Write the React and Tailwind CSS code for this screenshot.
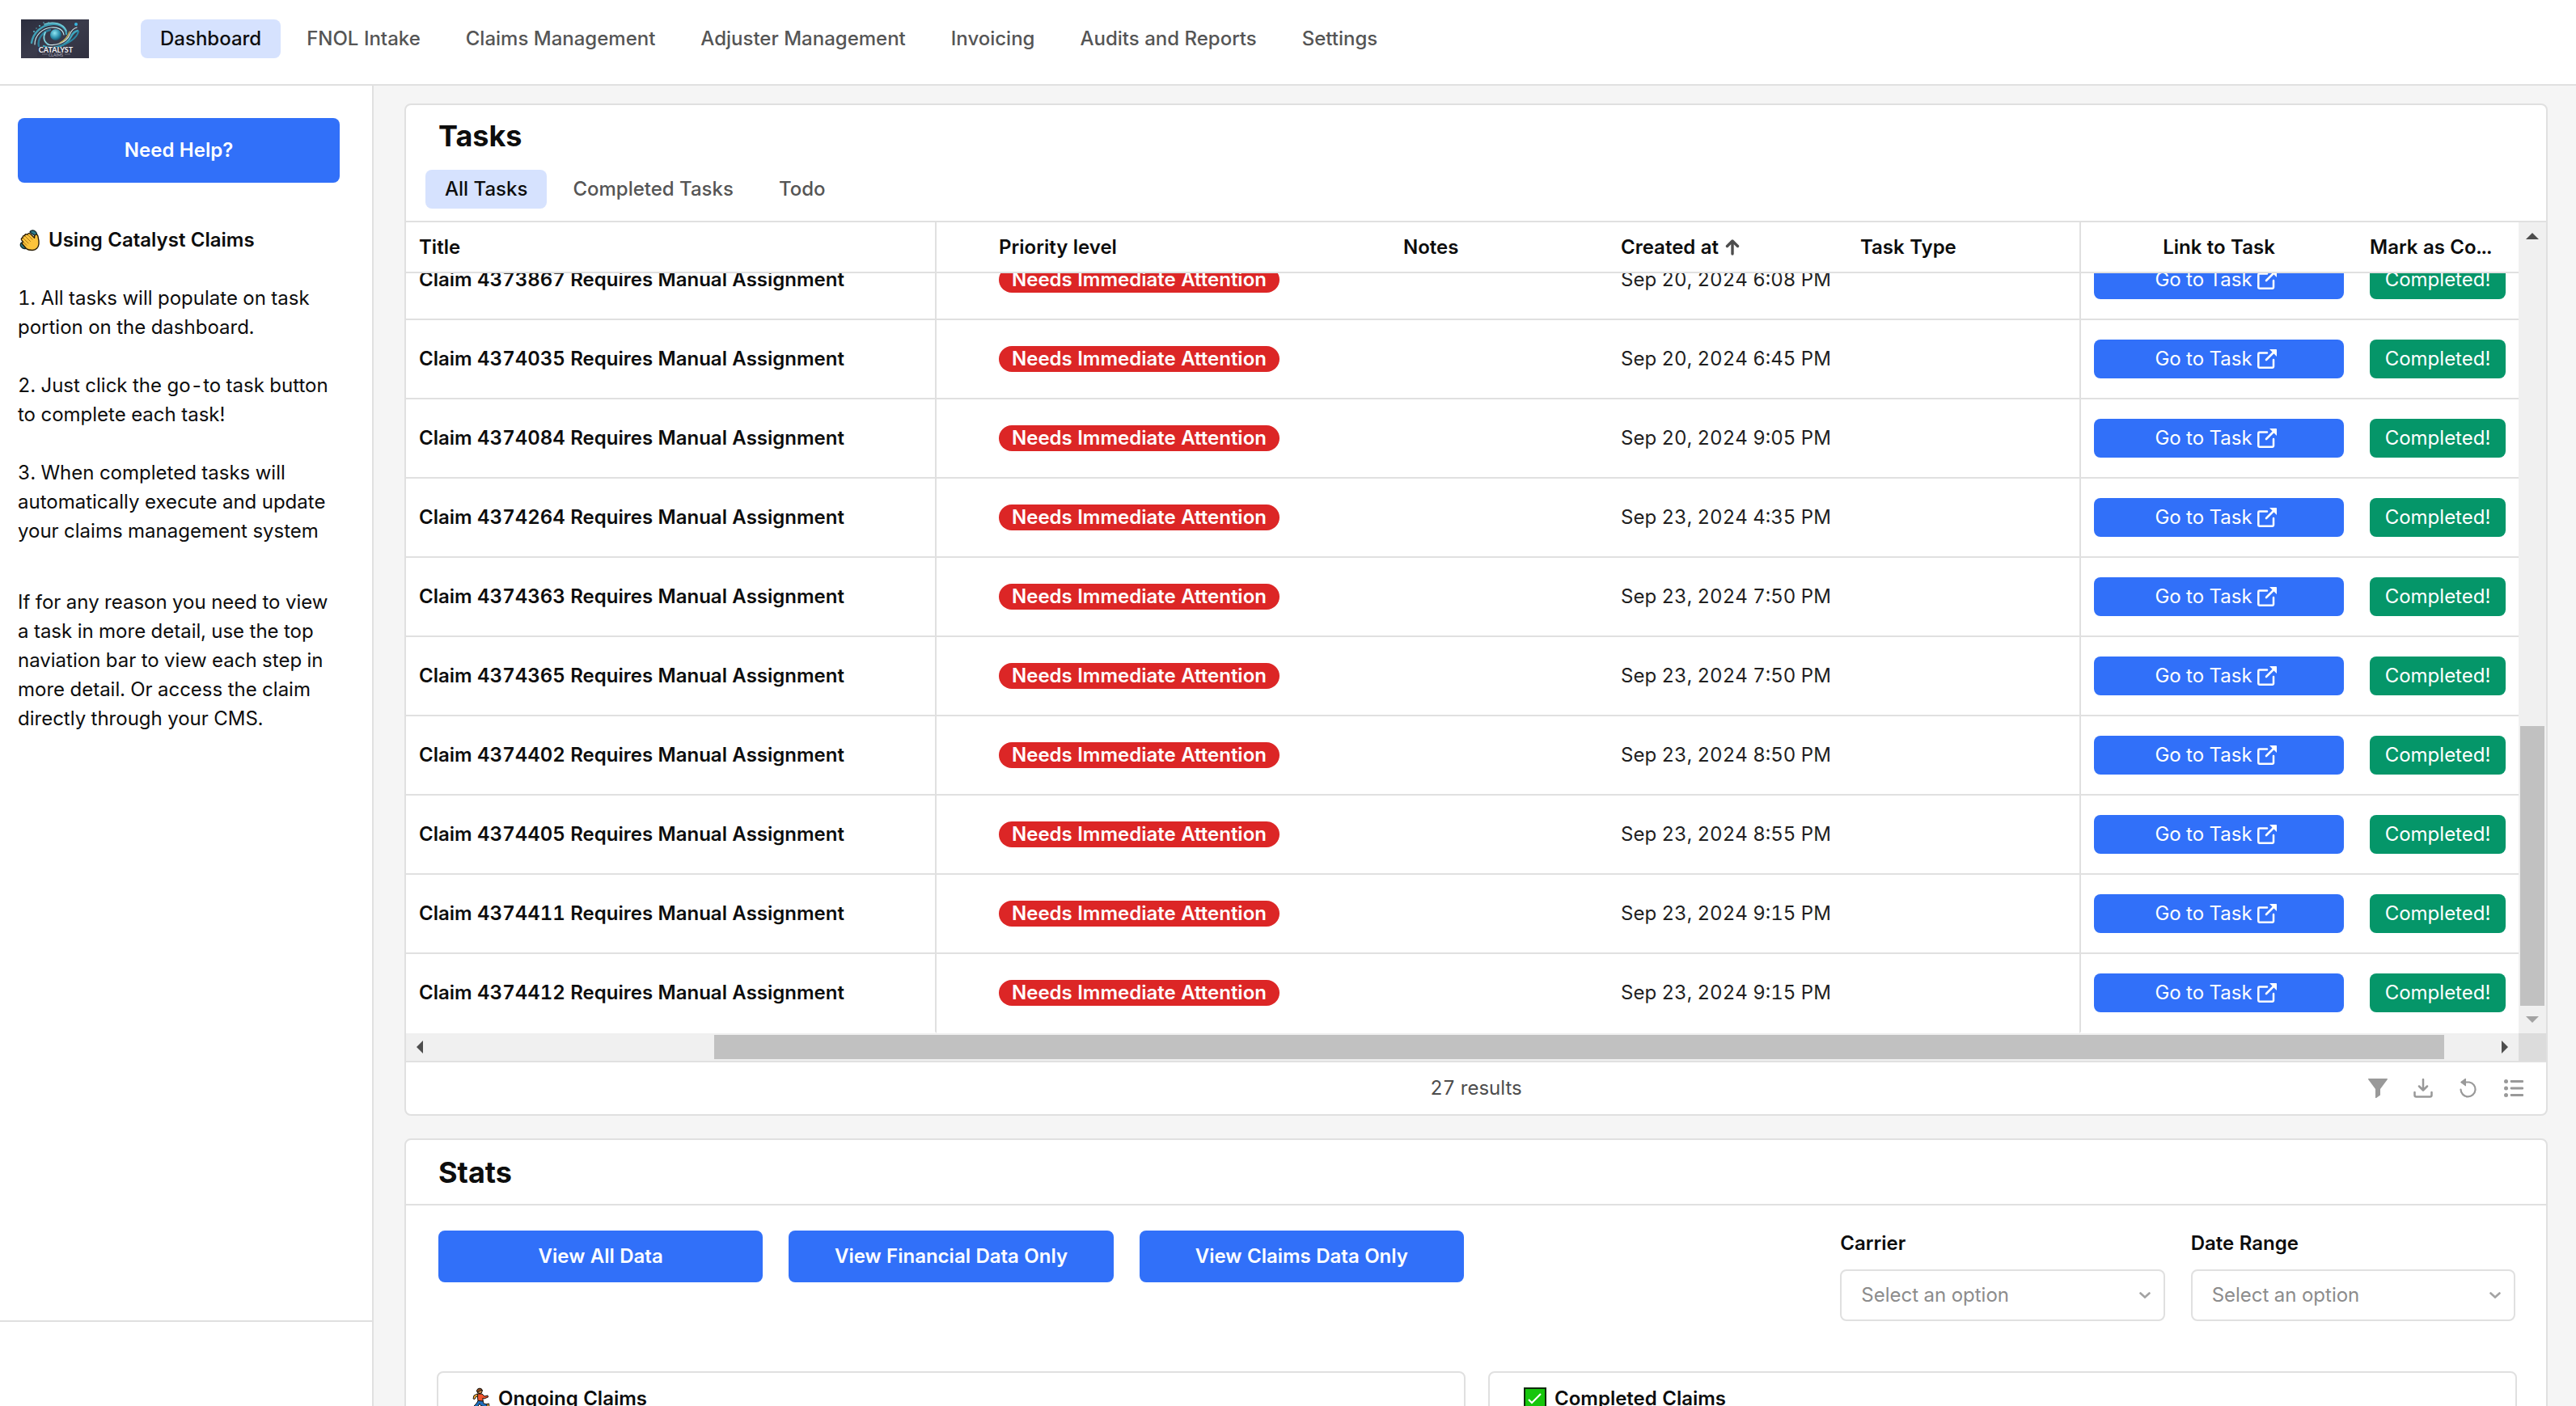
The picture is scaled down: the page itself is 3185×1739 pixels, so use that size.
import React, { useLayoutEffect, useRef } from 'react';

const navItems = [
  'Dashboard',
  'FNOL Intake',
  'Claims Management',
  'Adjuster Management',
  'Invoicing',
  'Audits and Reports',
  'Settings',
];

const tabs = ['All Tasks', 'Completed Tasks', 'Todo'];

const tasks = [
  { claim: 4373867, created: 'Sep 20, 2024 6:08 PM' },
  { claim: 4374035, created: 'Sep 20, 2024 6:45 PM' },
  { claim: 4374084, created: 'Sep 20, 2024 9:05 PM' },
  { claim: 4374264, created: 'Sep 23, 2024 4:35 PM' },
  { claim: 4374363, created: 'Sep 23, 2024 7:50 PM' },
  { claim: 4374365, created: 'Sep 23, 2024 7:50 PM' },
  { claim: 4374402, created: 'Sep 23, 2024 8:50 PM' },
  { claim: 4374405, created: 'Sep 23, 2024 8:55 PM' },
  { claim: 4374411, created: 'Sep 23, 2024 9:15 PM' },
  { claim: 4374412, created: 'Sep 23, 2024 9:15 PM' },
];

const Logo = () => (
  <svg viewBox="0 0 84 48" className="w-[84px] h-12 shrink-0" role="img" aria-label="Catalyst Claims">
    <defs>
      <linearGradient id="logoBg" x1="0" y1="0" x2="1" y2="1">
        <stop offset="0" stopColor="#2b2d3d" />
        <stop offset="0.5" stopColor="#3a3b4b" />
        <stop offset="1" stopColor="#30303f" />
      </linearGradient>
      <radialGradient id="logoOrb" cx="0.4" cy="0.35" r="0.7">
        <stop offset="0" stopColor="#8fe6f2" />
        <stop offset="0.6" stopColor="#2f93b0" />
        <stop offset="1" stopColor="#174a63" />
      </radialGradient>
    </defs>
    <rect width="84" height="48" fill="url(#logoBg)" />
    <g fill="none" strokeLinecap="round">
      <path d="M13 29c2-13 13-22 25-23 11-1 18 5 18 12" stroke="#3f9fb5" strokeWidth="2.4" />
      <path d="M17 31c0-12 10-20 20-21 9-1 15 3 16 9" stroke="#bfe9ee" strokeWidth="1.2" />
      <path d="M22 33c-2-9 5-18 14-20" stroke="#2c7f9c" strokeWidth="2.4" />
      <path d="M29 6c11-4 23-1 27 8" stroke="#6fc9d6" strokeWidth="1.6" />
      <path d="M28 33c10 5 28 1 34-12 2-4 4-6 8-7" stroke="#3fa7bf" strokeWidth="2.4" />
      <path d="M33 31c10 2 23-2 27-12 2-5 5-8 9-9" stroke="#d6eef0" strokeWidth="1.2" />
      <path d="M46 33c12-2 23-10 25-18" stroke="#2b86a3" strokeWidth="2" />
      <path d="M48 29c6-3 10-8 12-14" stroke="#c9b458" strokeWidth="1.2" />
      <path d="M30 16c-3 6-2 12 4 15" stroke="#7ed4de" strokeWidth="1.8" />
    </g>
    <circle cx="43" cy="19" r="7" fill="url(#logoOrb)" />
    <circle cx="68" cy="6" r="2" fill="#38b6e0" />
    <g fill="#5cc0d2">
      <circle cx="16" cy="15" r="1" />
      <circle cx="23" cy="8" r="1" />
      <circle cx="28" cy="4" r="0.8" />
      <circle cx="34" cy="4" r="0.8" />
      <circle cx="19" cy="11" r="0.7" />
    </g>
    <path d="M20 34h46v12H20z" fill="#343545" opacity="0.8" />
    <text x="43" y="41" textAnchor="middle" fontFamily="Lato, sans-serif" fontWeight="700" fontSize="9" fill="#f4f4f6">
      CATALYST
    </text>
    <path d="M26 43h7M54 43h7" stroke="#9a9aa8" strokeWidth="0.6" />
    <text x="43" y="46" textAnchor="middle" fontFamily="Lato, sans-serif" fontSize="5" fill="#b9b9c4">
      CLAIMS
    </text>
  </svg>
);

const WaveIcon = () => (
  <svg viewBox="0 0 28 28" className="w-7 h-7 shrink-0" aria-hidden="true">
    <g fill="#2f7d8c" stroke="#10292f" strokeWidth="1.4" strokeLinejoin="round">
      <path d="M15 4c1-2.500 5-2.600 7-.4 1.800 2 2 4.200 1.200 6.400z" />
      <path d="M5 17c-1.800.6-2.300 3.200-.9 5.200 1.500 2 4 2.800 6.400 1.800z" />
    </g>
    <path
      d="M10.500 24.500L5.800 19c-1-1.300-.2-2.500.9-2.600l-2-2.500c-1-1.400.2-2.900 1.600-2.600-1-1.700.6-3.300 2.200-2.600 0-2 2-2.700 3.400-1.500.5-1.800 2.500-2 3.700-.9l5 4.900.2-2.400c.3-2.300 3.400-2.300 4 0 .7 3 1.600 6.200 1.200 10-.4 4.400-3.600 7.700-8 7.700-3 0-5.400-.2-7.500-2z"
      fill="#fcc43c"
      stroke="#2a1d05"
      strokeWidth="1.400"
      strokeLinejoin="round"
    />
    <path d="M6.800 11.600l6.400 6.400M9 9l6.500 6.500M12.500 7.700l5.500 5.500M7 16.500l3.800 3.800" fill="none" stroke="#9a6a12" strokeWidth="0.9" strokeLinecap="round" />
  </svg>
);

const RunnerIcon = () => (
  <svg viewBox="0 0 22 28" className="w-[22px] h-7 shrink-0" aria-hidden="true">
    <g stroke="#16110c" strokeWidth="1" strokeLinejoin="round">
      <path d="M8 15l5 1 1 4 5 1-1 3-7-1-2-3-3 5-4 1-1-2 4-4z" fill="#1f6fbf" />
      <path d="M6 8l6 0 3 3 4-1 .5 2-5 2-1.500-1 0 4-6-.5z" fill="#f0542d" />
      <path d="M6 8l-4 2-1 4 2 .5 1.500-3 2.500-.5z" fill="#fbb13a" />
      <circle cx="9" cy="4.500" r="3.200" fill="#c98a4a" />
      <path d="M5.500 5c-.5-4 6-5.500 7-1-2-1-4 0-5 2z" fill="#8b4a22" />
      <path d="M18 20.500l2.500-.5.5 4-3 .5z" fill="#fbb13a" />
    </g>
  </svg>
);

const CheckIcon = () => (
  <svg viewBox="0 0 28 28" className="w-7 h-7 shrink-0" aria-hidden="true">
    <rect x="1" y="1" width="26" height="26" fill="#16c60c" stroke="#0f2b0d" strokeWidth="2" />
    <path d="M6 15l4 4L21 8" fill="none" stroke="#fff" strokeWidth="2.200" />
  </svg>
);

const ExternalIcon = () => (
  <svg viewBox="0 0 24 24" className="w-6 h-6" aria-hidden="true">
    <path d="M12 4.500H2.500a1.200 1.200 0 0 0-1.200 1.200v15.800a1.200 1.200 0 0 0 1.200 1.200h16.300a1.200 1.200 0 0 0 1.200-1.200V13" fill="none" stroke="currentColor" strokeWidth="2.500" strokeLinecap="round" />
    <path d="M11 13L20 4" stroke="currentColor" strokeWidth="2.600" strokeLinecap="round" />
    <path d="M15 0h8.200a.8.8 0 0 1 .8.8V9z" fill="currentColor" />
  </svg>
);

const toolbar = [
  {
    label: 'Filter',
    icon: <path d="M.6 0h22.800c.5 0 .8.600.5 1L15 13v7.500L10 24h-1V13L.100 1c-.3-.4 0-1 .5-1z" fill="currentColor" />,
  },
  {
    label: 'Download',
    icon: (
      <path d="M12 1v13M7 9.500l5 5 5-5M1.500 17v3.500a2 2 0 0 0 2 2h17a2 2 0 0 0 2-2V17" fill="none" stroke="currentColor" strokeWidth="2.500" strokeLinecap="round" strokeLinejoin="round" />
    ),
  },
  {
    label: 'Refresh',
    icon: (
      <>
        <path d="M4 4.500h9a9 9 0 1 1-10.500 9" fill="none" stroke="currentColor" strokeWidth="2.200" strokeLinecap="round" />
        <path d="M8.500 0v9L2.500 4.500z" fill="currentColor" stroke="currentColor" strokeLinejoin="round" />
      </>
    ),
  },
  {
    label: 'Columns',
    icon: (
      <>
        <path d="M9 3.500h14M9 12h14M9 20.500h14" stroke="currentColor" strokeWidth="2.800" strokeLinecap="round" />
        <circle cx="2.500" cy="3.500" r="2.500" fill="currentColor" />
        <circle cx="2.500" cy="12" r="2.500" fill="currentColor" />
        <circle cx="2.500" cy="20.500" r="2.500" fill="currentColor" />
      </>
    ),
  },
];

const Arrow = ({ d, className }) => (
  <svg viewBox="0 0 16 16" className={className} aria-hidden="true">
    <path d={d} fill="currentColor" />
  </svg>
);

const TaskTable = () => {
  const boxRef = useRef(null);

  // open on the newest tasks
  useLayoutEffect(() => {
    boxRef.current.scrollTop = boxRef.current.scrollHeight;
  }, []);

  const th = 'sticky top-0 z-10 h-[63px] p-0 px-4 bg-white border-b-2 border-[#e0e0e0] font-semibold whitespace-nowrap';

  return (
    <div>
      <div className="flex">
        <div ref={boxRef} className="flex-1 min-w-0 h-[1003px] overflow-y-auto [scrollbar-width:none]">
          <table className="w-full table-fixed border-separate border-spacing-0 text-left">
            <colgroup>
              <col className="w-[656px]" />
              <col className="w-[561px]" />
              <col className="w-[269px]" />
              <col className="w-[296px]" />
              <col />
              <col className="w-[343px]" />
              <col className="w-[200px]" />
            </colgroup>
            <thead>
              <tr>
                <th className={`${th} border-r-2`}>Title</th>
                <th className={`${th} pl-[77px]`}>Priority level</th>
                <th className={th}>Notes</th>
                <th className={th}>
                  <span className="flex items-center gap-2">
                    Created at
                    <svg viewBox="0 0 18 20" className="w-[18px] h-5 text-[#4d4d4d]" aria-hidden="true">
                      <path d="M9 18V3M2.500 8.500L9 2l6.500 6.500" fill="none" stroke="currentColor" strokeWidth="3.400" strokeLinecap="round" strokeLinejoin="round" />
                    </svg>
                  </span>
                </th>
                <th className={th}>Task Type</th>
                <th className={`${th} border-l-2 text-center`}>Link to Task</th>
                <th className={th}>Mark as Co...</th>
              </tr>
            </thead>
            <tbody className="[&_td]:h-[98px] [&_td]:py-0 [&_td]:px-4 [&_td]:border-b-2 [&_td]:border-[#e0e0e0] [&_tr:last-child_td]:border-b-white">
              {tasks.map((task) => (
                <tr key={task.claim}>
                  <td className="border-r-2 font-semibold whitespace-nowrap">
                    Claim {task.claim} Requires Manual Assignment
                  </td>
                  <td className="pl-[77px]!">
                    <span className="block w-fit h-8 px-4 rounded-full bg-[#dc2626] text-white font-semibold leading-8 whitespace-nowrap">
                      Needs Immediate Attention
                    </span>
                  </td>
                  <td />
                  <td className="whitespace-nowrap text-[#1f1f1f]">{task.created}</td>
                  <td />
                  <td className="border-l-2">
                    <button className="w-full h-12 pr-2 flex items-center justify-center gap-1.5 rounded-lg bg-[#3170f9] text-white">
                      Go to Task
                      <ExternalIcon />
                    </button>
                  </td>
                  <td>
                    <button className="w-full h-12 flex items-center justify-center rounded-lg bg-[#059669] text-white">
                      Completed!
                    </button>
                  </td>
                </tr>
              ))}
            </tbody>
          </table>
        </div>
        <div className="w-[34px] flex flex-col items-center bg-[#f0f0f0]">
          <div className="h-[34px] flex items-center text-[#4d4d4d]">
            <Arrow className="w-4 h-4" d="M0 12L8 4l8 8z" />
          </div>
          <div className="w-[30px] flex-1" />
          <div className="w-[30px] h-[346px] bg-[#c1c1c1]" />
          <div className="h-[34px] flex items-center text-[#a3a3a3]">
            <Arrow className="w-4 h-4" d="M0 4l8 8 8-8z" />
          </div>
        </div>
      </div>
      <div className="flex h-[34px]">
        <div className="flex-1 flex items-center bg-[#f0f0f0] text-[#4d4d4d]">
          <div className="w-[34px] flex justify-center">
            <Arrow className="w-4 h-4" d="M12 0L4 8l8 8z" />
          </div>
          <div className="grow-[347] basis-0" />
          <div className="h-[30px] grow-[2139] basis-0 bg-[#c1c1c1]" />
          <div className="grow-[58] basis-0" />
          <div className="w-[34px] flex justify-center">
            <Arrow className="w-4 h-4" d="M4 0l8 8-8 8z" />
          </div>
        </div>
        <div className="w-[34px] bg-[#dcdcdc]" />
      </div>
    </div>
  );
};

const SelectField = ({ id, label, className }) => (
  <div className={className}>
    <label htmlFor={id} className="block leading-8 font-semibold">{label}</label>
    <div className="relative mt-4">
      <select id={id} className="w-full h-16 pl-6 pr-16 appearance-none rounded-lg border-2 border-[#e0e0e0] bg-white text-[#8c8c8c]">
        <option>Select an option</option>
      </select>
      <svg viewBox="0 0 14 8" className="absolute right-[18px] top-7 w-[14px] h-2 text-[#a3a3a3] pointer-events-none" aria-hidden="true">
        <path d="M1.500 1.500L7 6.500l5.500-5" fill="none" stroke="currentColor" strokeWidth="2.600" strokeLinecap="round" />
      </svg>
    </div>
  </div>
);

const Sidebar = () => (
  <aside className="w-[462px] shrink-0 flex flex-col bg-white border-r-2 border-[#e0e0e0]">
    <div className="flex-1 pt-10 pl-[22px] pr-10">
      <button className="w-full h-20 rounded-lg bg-[#3170f9] text-white font-semibold">Need Help?</button>
      <div className="mt-[53px] space-y-9">
        <h2 className="flex items-center gap-2.5 font-semibold">
          <WaveIcon />
          Using Catalyst Claims
        </h2>
        <p>1. All tasks will populate on task portion on the dashboard.</p>
        <p>2. Just click the go-to task button to complete each task!</p>
        <p>3. When completed tasks will automatically execute and update your claims management system</p>
      </div>
      <p className="mt-[52px]">
        If for any reason you need to view a task in more detail, use the top naviation bar to view each step in more detail. Or access the claim directly through your CMS.
      </p>
    </div>
    <div className="h-[106px] border-t-2 border-[#e0e0e0]" />
  </aside>
);

const App = () => {
  return (
    <div className="h-screen flex flex-col overflow-hidden bg-[#f5f5f5] text-[#0d0d0d] text-[24px] leading-9 tabular-nums font-[Inter,sans-serif]">
      <header className="h-[106px] shrink-0 flex items-start pt-6 pl-[26px] bg-white border-b-2 border-[#e0e0e0]">
        <Logo />
        <nav className="ml-16 flex gap-2">
          {navItems.map((item, i) => (
            <a
              key={item}
              href="#"
              className={`h-12 px-6 flex items-center rounded-lg font-medium whitespace-nowrap ${i === 0 ? 'bg-[#d6e2fe]' : 'text-[#555555]'}`}
            >
              {item}
            </a>
          ))}
        </nav>
      </header>

      <div className="flex-1 min-h-0 flex">
        <Sidebar />
        <main className="flex-1 min-w-0 overflow-hidden pt-[22px] pl-[38px] pr-[35px]">
          <section className="bg-white border-2 border-[#e0e0e0] rounded-lg">
            <div className="pt-4 pb-[15px] border-b-2 border-[#e0e0e0]">
              <h1 className="pl-10 text-[36px] leading-11 font-bold">Tasks</h1>
              <div className="mt-5 pl-6 flex gap-2">
                {tabs.map((tab, i) => (
                  <button
                    key={tab}
                    className={`h-12 px-6 rounded-lg font-medium ${i === 0 ? 'bg-[#d6e2fe]' : 'text-[#555555]'}`}
                  >
                    {tab}
                  </button>
                ))}
              </div>
            </div>
            <TaskTable />
            <footer className="h-[66px] grid grid-cols-3 items-center border-t-2 border-[#e0e0e0]">
              <p className="col-start-2 text-center text-[#4d4d4d]">27 results</p>
              <div className="pr-7 flex justify-end gap-8 text-[#999999]">
                {toolbar.map(({ label, icon }) => (
                  <button key={label} aria-label={label}>
                    <svg viewBox="0 0 24 24" className="w-6 h-6">{icon}</svg>
                  </button>
                ))}
              </div>
            </footer>
          </section>

          <section className="mt-7 h-[800px] bg-white border-2 border-[#e0e0e0] rounded-lg">
            <div className="h-[81px] pl-10 flex items-center border-b-2 border-[#e0e0e0]">
              <h1 className="text-[36px] leading-11 font-bold">Stats</h1>
            </div>
            <div className="pt-[31px] pl-10 pr-[38px] grid grid-cols-6 gap-8 items-start">
              <button className="h-16 rounded-lg bg-[#3170f9] text-white font-semibold">View All Data</button>
              <button className="h-16 rounded-lg bg-[#3170f9] text-white font-semibold">View Financial Data Only</button>
              <button className="h-16 rounded-lg bg-[#3170f9] text-white font-semibold">View Claims Data Only</button>
              <SelectField id="carrier" label="Carrier" className="col-start-5" />
              <SelectField id="date-range" label="Date Range" />
            </div>
            <div className="mt-[62px] pl-[38px] pr-9 grid grid-cols-2 gap-7">
              <div className="h-[480px] pt-[14px] pl-[42px] border-2 border-[#e0e0e0] rounded-lg">
                <h2 className="flex items-center gap-2.5 font-semibold">
                  <RunnerIcon />
                  Ongoing Claims
                </h2>
              </div>
              <div className="h-[480px] pt-[14px] pl-[42px] border-2 border-[#e0e0e0] rounded-lg">
                <h2 className="flex items-center gap-2.5 font-semibold">
                  <CheckIcon />
                  Completed Claims
                </h2>
              </div>
            </div>
          </section>
        </main>
      </div>
    </div>
  );
};

export default App;
